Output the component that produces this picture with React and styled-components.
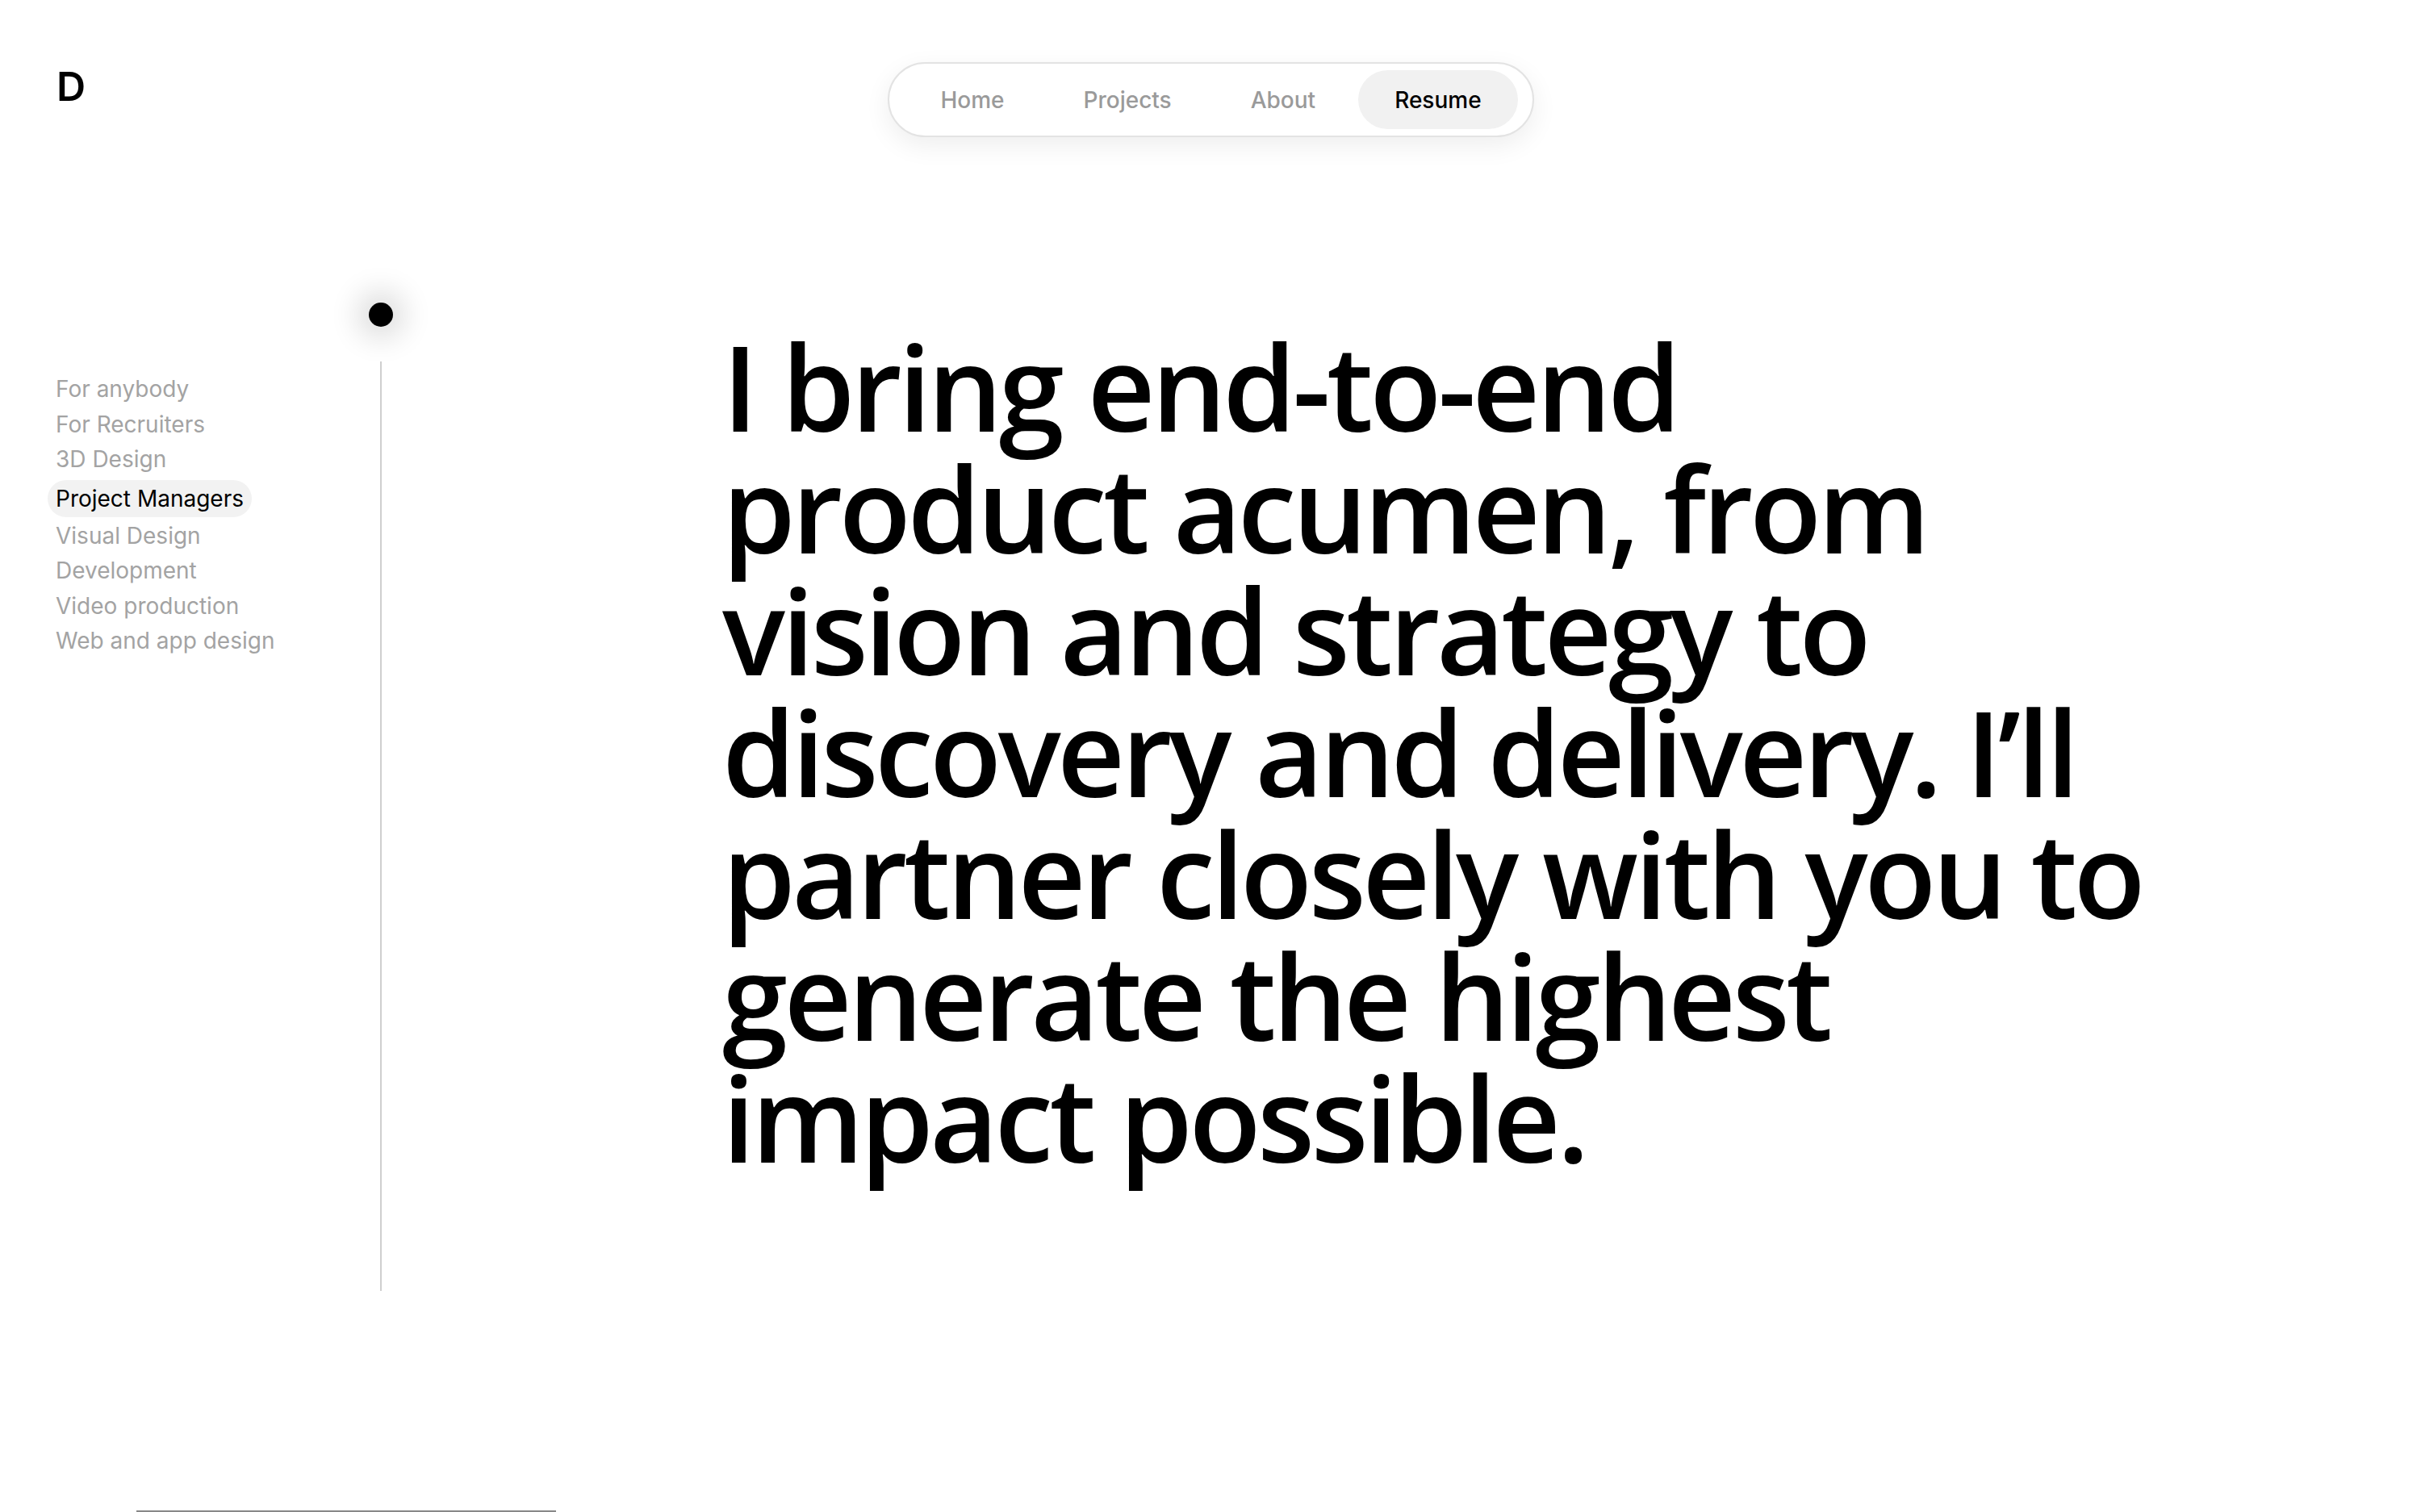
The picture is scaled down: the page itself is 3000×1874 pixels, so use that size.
import styled, { createGlobalStyle } from "styled-components";

const GlobalStyle = createGlobalStyle`
  html, body {
    margin: 0;
    padding: 0;
    background: #ffffff;
  }
  body {
    font-family: Inter, "Noto Sans", sans-serif;
    color: #000;
  }
  * {
    box-sizing: border-box;
  }
`;

const Page = styled.div`
  position: relative;
  display: flex;
  flex-direction: column;
  height: 1874px;
  overflow: hidden;
  padding-left: 69px;
  background: #fff;
`;

const Header = styled.header`
  display: flex;
  align-items: flex-start;
  padding-top: 77px;
`;

const Logo = styled.div`
  width: 0;
  margin-top: 5px;
  margin-left: 1px;
  font-family: Inter, sans-serif;
  font-size: 50px;
  font-weight: 600;
  line-height: 1;
  white-space: nowrap;
`;

const NavSlot = styled.div`
  flex: 1;
  display: flex;
  justify-content: center;
  margin-left: -69px;
`;

const Nav = styled.nav`
  display: flex;
  gap: 8px;
  padding: 8px 18px;
  border: 2px solid #e3e3e3;
  border-radius: 999px;
  background: #fff;
  box-shadow: 0 10px 32px rgba(0, 0, 0, 0.07);
`;

const NavItem = styled.a`
  display: flex;
  align-items: center;
  height: 73px;
  padding: 0 45px;
  border-radius: 999px;
  font-family: Inter, sans-serif;
  font-size: 28px;
  font-weight: 500;
  color: ${(p) => (p.$active ? "#000" : "#9a9a9a")};
  background: ${(p) => (p.$active ? "#f1f1f1" : "transparent")};
  text-decoration: none;
  white-space: nowrap;
`;

const Body = styled.div`
  display: flex;
  align-items: flex-start;
  margin-top: 205px;
`;

const Sidebar = styled.aside`
  display: grid;
  grid-template-columns: 388px 30px;
  flex-shrink: 0;
`;

const TopicList = styled.ul`
  list-style: none;
  margin: 0;
  padding: 86px 0 0;
  display: flex;
  flex-direction: column;
  align-items: flex-start;
`;

const Topic = styled.li`
  font-family: Inter, sans-serif;
  font-size: 28px;
  line-height: ${(p) => (p.$active ? "38px" : "43.5px")};
  font-weight: 400;
  color: ${(p) => (p.$active ? "#000" : "#a3a3a3")};
  background: ${(p) => (p.$active ? "#f2f2f2" : "transparent")};
  border-radius: 999px;
  padding: ${(p) => (p.$active ? "4px 10px" : "0")};
  margin: ${(p) => (p.$active ? "3px 0 2px -10px" : "0")};
  white-space: nowrap;
`;

const Timeline = styled.div`
  display: flex;
  flex-direction: column;
  align-items: center;
  gap: 43px;
`;

const Dot = styled.span`
  width: 30px;
  height: 30px;
  border-radius: 50%;
  background: #000;
  box-shadow: 0 0 36px 14px rgba(0, 0, 0, 0.14);
`;

const Track = styled.span`
  width: 2px;
  height: 1152px;
  background: #cfcfcf;
`;

const Main = styled.main`
  margin-left: 408px;
  padding-top: 28px;
`;

const Statement = styled.h1`
  margin: 0;
  font-family: "Open Sans", "Noto Sans", sans-serif;
  font-size: 146px;
  font-weight: 600;
  line-height: 151px;
  letter-spacing: -0.031em;
  color: #000;
  white-space: nowrap;
`;

const Footer = styled.footer`
  margin-top: auto;
  margin-left: 100px;
  width: 520px;
  height: 2px;
  background: #888;
`;

const navLinks = ["Home", "Projects", "About", "Resume"];

const topics = [
  "For anybody",
  "For Recruiters",
  "3D Design",
  "Project Managers",
  "Visual Design",
  "Development",
  "Video production",
  "Web and app design",
];

const lines = [
  "I bring end-to-end",
  "product acumen, from",
  "vision and strategy to",
  "discovery and delivery. I\u2019ll",
  "partner closely with you to",
  "generate the highest",
  "impact possible.",
];

const App = () => {
  return (
    <>
      <GlobalStyle />
      <Page>
        <Header>
          <Logo>D</Logo>
          <NavSlot>
            <Nav>
              {navLinks.map((link) => (
                <NavItem key={link} href="#" $active={link === "Resume"}>
                  {link}
                </NavItem>
              ))}
            </Nav>
          </NavSlot>
        </Header>
        <Body>
          <Sidebar>
            <TopicList>
              {topics.map((t) => (
                <Topic key={t} $active={t === "Project Managers"}>
                  {t}
                </Topic>
              ))}
            </TopicList>
            <Timeline>
              <Dot />
              <Track />
            </Timeline>
          </Sidebar>
          <Main>
            <Statement>
              {lines.map((l, i) => (
                <span key={i}>
                  {l}
                  {i < lines.length - 1 && <br />}
                </span>
              ))}
            </Statement>
          </Main>
        </Body>
        <Footer />
      </Page>
    </>
  );
};

export default App;
